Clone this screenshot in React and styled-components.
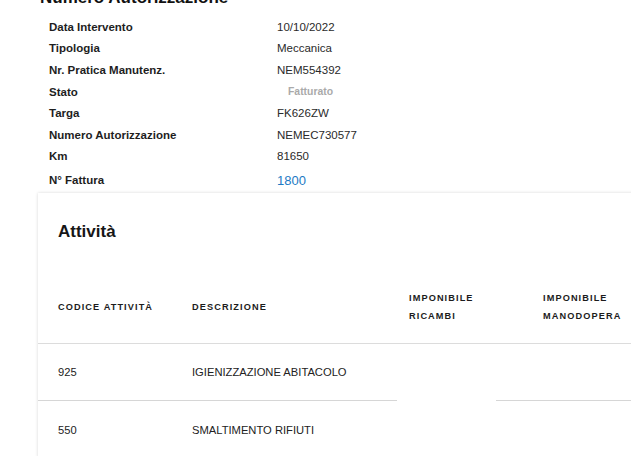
import React from 'react';
import styled, {createGlobalStyle} from 'styled-components';

const details = [
    {label: 'Data Intervento', value: '10/10/2022'},
    {label: 'Tipologia', value: 'Meccanica'},
    {label: 'Nr. Pratica Manutenz.', value: 'NEM554392'},
    {label: 'Stato', value: 'Fatturato', kind: 'status'},
    {label: 'Targa', value: 'FK626ZW'},
    {label: 'Numero Autorizzazione', value: 'NEMEC730577'},
    {label: 'Km', value: '81650'},
    {label: 'N° Fattura', value: '1800', kind: 'link'},
];

const activities = [
    {code: '925', description: 'IGIENIZZAZIONE ABITACOLO'},
    {code: '550', description: 'SMALTIMENTO RIFIUTI'},
];

function App() {
    return (
        <>
            <GlobalStyle />
            <Page>
                <Heading>Numero Autorizzazione</Heading>
                <InfoGrid>
                    {details.map((item) => (
                        <React.Fragment key={item.label}>
                            <InfoLabel>{item.label}</InfoLabel>
                            <InfoValue $kind={item.kind}>{item.value}</InfoValue>
                        </React.Fragment>
                    ))}
                </InfoGrid>
                <Card>
                    <CardTitle>Attività</CardTitle>
                    <Table>
                        <HeadCell>CODICE ATTIVITÀ</HeadCell>
                        <HeadCell>DESCRIZIONE</HeadCell>
                        <HeadCell>IMPONIBILE<br />RICAMBI</HeadCell>
                        <HeadCell>IMPONIBILE<br />MANODOPERA</HeadCell>
                        {activities.map((a, index) => {
                            const last = index === activities.length - 1;
                            return (
                                <React.Fragment key={a.code}>
                                    <Cell $last={last}>{a.code}</Cell>
                                    <Cell $last={last}>{a.description}</Cell>
                                    <Cell $last={last} $broken={index === 0}></Cell>
                                    <Cell $last={last}></Cell>
                                </React.Fragment>
                            );
                        })}
                    </Table>
                </Card>
            </Page>
        </>
    );
}
export default App;

const GlobalStyle = createGlobalStyle`
    html, body {
        margin: 0;
        padding: 0;
        overflow: hidden;
        background: #fff;
    }
    body {
        font-family: "Liberation Sans", Arial, sans-serif;
        color: #222;
    }
`;
const Page = styled.div`
    padding: 0 0 40px 38px;
`;
const Heading = styled.h1`
    margin: -12px 0 0 2px;
    font-size: 17px;
    line-height: 20px;
    font-weight: 700;
    color: #111;
`;
const InfoGrid = styled.div`
    display: grid;
    grid-template-columns: 228px auto;
    grid-template-rows: repeat(7, 21.6px) 26px;
    align-items: center;
    margin: 8px 0 0 11px;
`;
const InfoLabel = styled.div`
    font-size: 11.5px;
    font-weight: 700;
    color: #1e1e1e;
`;
const InfoValue = styled.div`
    font-size: ${(p) => (p.$kind === 'link' ? '13px' : p.$kind === 'status' ? '10.4px' : '11.5px')};
    font-weight: ${(p) => (p.$kind === 'status' ? 700 : 400)};
    color: ${(p) => (p.$kind === 'link' ? '#1d7ac4' : p.$kind === 'status' ? '#aaa' : '#2a2a2a')};
    padding-left: ${(p) => (p.$kind === 'status' ? '11px' : '0')};
`;
const Card = styled.div`
    width: 760px;
    background: #fff;
    box-shadow: 0 0 3px rgba(0, 0, 0, 0.16);
    padding-top: 29px;
`;
const CardTitle = styled.h2`
    margin: 0 0 28px 20px;
    font-size: 17px;
    line-height: 20px;
    font-weight: 700;
    color: #161616;
`;
const Table = styled.div`
    display: grid;
    grid-template-columns: 134px 217px 134px 275px;
    grid-template-rows: 74px 57px 57px;
`;
const HeadCell = styled.div`
    display: flex;
    align-items: center;
    padding-left: 20px;
    font-size: 9.2px;
    line-height: 18px;
    font-weight: 700;
    letter-spacing: 1.1px;
    color: #1c1c1c;
    border-bottom: 1px solid #dcdcdc;
`;
const Cell = styled.div`
    display: flex;
    align-items: center;
    padding-left: 20px;
    font-size: 11.2px;
    color: #222;
    border-bottom: ${(p) => (p.$last || p.$broken ? 'none' : '1px solid #d6d6d6')};
    ${(p) => p.$broken && `
        background:
            linear-gradient(#d6d6d6, #d6d6d6) left bottom / 8px 1px no-repeat,
            linear-gradient(#d6d6d6, #d6d6d6) right bottom / 27px 1px no-repeat;
    `}
`;
